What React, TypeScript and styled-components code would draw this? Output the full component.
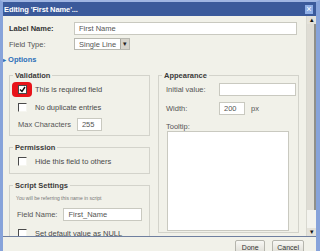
import styled, { createGlobalStyle } from "styled-components";

const GlobalStyle = createGlobalStyle`
  html, body {
    margin: 0;
    padding: 0;
    background: #ffffff;
  }
  body {
    font-family: Tahoma, "Liberation Sans", Arial, sans-serif;
  }
`;

export default function App() {
  return (
    <>
      <GlobalStyle />
      <Window>
        <TitleBar>
          <Title>Editing 'First Name'...</Title>
          <CloseButton>×</CloseButton>
        </TitleBar>
        <Body>
          <ScrollArea>
            <FormGrid>
              <Label $bold>Label Name:</Label>
              <TextInput $width="223px">First Name</TextInput>
              <Label>Field Type:</Label>
              <Select>
                <span>Single Line</span>
                <SelectArrow>▾</SelectArrow>
              </Select>
            </FormGrid>
            <Options>
              <span className="tri">▸</span> Options
            </Options>
            <Columns>
              <LeftColumn>
                <Fieldset $height="65px" $pad="2px">
                  <Legend>Validation</Legend>
                  <CheckRow>
                    <Highlight>
                      <CheckBox $checked>
                        <svg width="7" height="7" viewBox="0 0 7 7">
                          <path d="M1 3.5 L3 5.5 L6 1" stroke="#111" strokeWidth="1.4" fill="none" />
                        </svg>
                      </CheckBox>
                    </Highlight>
                    <CheckText>This is required field</CheckText>
                  </CheckRow>
                  <CheckRow>
                    <BoxSlot>
                      <CheckBox />
                    </BoxSlot>
                    <CheckText>No duplicate entries</CheckText>
                  </CheckRow>
                  <InlineRow $indent="8px">
                    <Label>Max Characters</Label>
                    <TextInput $width="25px">255</TextInput>
                  </InlineRow>
                </Fieldset>
                <Fieldset $height="31px" $pad="2px">
                  <Legend>Permission</Legend>
                  <CheckRow>
                    <BoxSlot>
                      <CheckBox />
                    </BoxSlot>
                    <CheckText>Hide this field to others</CheckText>
                  </CheckRow>
                </Fieldset>
                <Fieldset $height="72px" $pad="4px" $gap="5px">
                  <Legend>Script Settings</Legend>
                  <Hint>You will be referring this name in script</Hint>
                  <InlineRow $indent="7px">
                    <Label>Field Name:</Label>
                    <TextInput $width="79px">First_Name</TextInput>
                  </InlineRow>
                  <CheckRow>
                    <BoxSlot>
                      <CheckBox />
                    </BoxSlot>
                    <CheckText>Set default value as NULL</CheckText>
                  </CheckRow>
                </Fieldset>
              </LeftColumn>
              <Fieldset $height="162px" $pad="3px" $gap="6px">
                <Legend>Appearance</Legend>
                <InlineRow $indent="7px">
                  <Label $width="47px">Initial value:</Label>
                  <TextInput $width="77px" />
                </InlineRow>
                <InlineRow $indent="7px">
                  <Label $width="47px">Width:</Label>
                  <TextInput $width="26px">200</TextInput>
                  <Label>px</Label>
                </InlineRow>
                <TooltipBlock>
                  <Label $indent="7px">Tooltip:</Label>
                  <TextArea />
                </TooltipBlock>
              </Fieldset>
            </Columns>
          </ScrollArea>
          <Scrollbar>
            <ScrollButton>▴</ScrollButton>
            <Thumb />
            <Track />
            <ScrollButton>▾</ScrollButton>
          </Scrollbar>
        </Body>
        <Footer>
          <Button>Done</Button>
          <Button>Cancel</Button>
        </Footer>
      </Window>
    </>
  );
}

const Window = styled.div`
  width: 320px;
  height: 251px;
  box-sizing: border-box;
  overflow: hidden;
  display: flex;
  flex-direction: column;
  background: #f1f1e9;
  border-left: 3px solid #87a3da;
  border-right: 4px solid #87a3da;
  border-top: 2px solid #9fb5e2;
`;

const TitleBar = styled.div`
  height: 14px;
  flex: none;
  display: flex;
  align-items: center;
  justify-content: space-between;
  background: #3b5a9b;
  padding: 0 3px 0 1px;
`;

const Title = styled.span`
  color: #ffffff;
  font-weight: bold;
  font-size: 7.5px;
  letter-spacing: -0.1px;
`;

const CloseButton = styled.span`
  width: 8px;
  height: 9px;
  background: #8eaee6;
  color: #ffffff;
  font-size: 9px;
  line-height: 8px;
  text-align: center;
`;

const Body = styled.div`
  flex: none;
  height: 220px;
  display: flex;
  border-bottom: 1px solid #6f7f9f;
`;

const ScrollArea = styled.div`
  flex: 1;
  overflow: hidden;
  padding: 6px 8px 0 6px;
  font-size: 7.5px;
  color: #4a4a4a;
`;

const FormGrid = styled.div`
  display: grid;
  grid-template-columns: 65px 1fr;
  row-gap: 3px;
  align-items: center;
`;

const Label = styled.span<{ $bold?: boolean; $width?: string; $indent?: string }>`
  display: inline-block;
  font-size: 7.5px;
  line-height: 9px;
  color: ${({ $bold }) => ($bold ? "#333" : "#555")};
  font-weight: ${({ $bold }) => ($bold ? "bold" : "normal")};
  ${({ $width }) => $width && `width: ${$width};`}
  ${({ $indent }) => $indent && `padding-left: ${$indent};`}
`;

const TextInput = styled.div<{ $width: string }>`
  width: ${({ $width }) => $width};
  height: 13px;
  box-sizing: border-box;
  background: #ffffff;
  border: 1px solid #c9c9c0;
  padding: 0 4px;
  font-size: 7.5px;
  line-height: 11px;
  color: #555;
`;

const Select = styled.div`
  width: 56px;
  height: 12px;
  box-sizing: border-box;
  display: flex;
  align-items: center;
  justify-content: space-between;
  background: #ffffff;
  border: 1px solid #b8b8b0;
  padding-left: 4px;
  font-size: 7.5px;
  color: #555;
`;

const SelectArrow = styled.span`
  width: 8px;
  height: 10px;
  background: #d6d3ca;
  border-left: 1px solid #a8a8a0;
  font-size: 7px;
  line-height: 10px;
  text-align: center;
  color: #222;
`;

const Options = styled.div`
  margin: 5px 0 0 -6px;
  color: #2c6fb8;
  font-weight: bold;
  font-size: 7.5px;
  .tri {
    font-size: 6px;
  }
`;

const Columns = styled.div`
  display: grid;
  grid-template-columns: 141px 141px;
  column-gap: 8px;
  align-items: start;
  margin-top: 7px;
`;

const LeftColumn = styled.div`
  display: flex;
  flex-direction: column;
  gap: 7px;
`;

const Fieldset = styled.fieldset<{ $height: string; $pad?: string; $gap?: string }>`
  margin: 0;
  min-width: 0;
  height: ${({ $height }) => $height};
  box-sizing: border-box;
  border: 1px solid #d3d3cb;
  padding: ${({ $pad }) => $pad || "0"} 0 0 0;
  display: flex;
  flex-direction: column;
  gap: ${({ $gap }) => $gap || "3px"};
`;

const Legend = styled.legend`
  margin-left: 3px;
  padding: 0 2px;
  font-weight: bold;
  font-size: 7.5px;
  color: #3a3a3a;
`;

const CheckRow = styled.div`
  display: flex;
  align-items: center;
  height: 15px;
  padding-left: 2px;
  gap: 3px;
`;

const BoxSlot = styled.div`
  width: 20px;
  display: flex;
  justify-content: center;
`;

const Highlight = styled.div`
  width: 20px;
  height: 15px;
  border-radius: 4px;
  background: #e8141a;
  display: flex;
  align-items: center;
  justify-content: center;
`;

const CheckBox = styled.div<{ $checked?: boolean }>`
  width: 7px;
  height: 7px;
  background: #ffffff;
  border-top: 1px solid #4a4a4a;
  border-left: 1px solid #4a4a4a;
  border-right: 1px solid ${({ $checked }) => ($checked ? "#4a4a4a" : "#f6f6f0")};
  border-bottom: 1px solid ${({ $checked }) => ($checked ? "#4a4a4a" : "#f6f6f0")};
  display: flex;
  svg {
    display: block;
  }
`;

const CheckText = styled.span`
  font-size: 7.5px;
  color: #4a4a4a;
`;

const InlineRow = styled.div<{ $indent: string }>`
  display: flex;
  align-items: center;
  gap: 6px;
  padding-left: ${({ $indent }) => $indent};
`;

const Hint = styled.div`
  font-size: 5px;
  color: #777;
  padding-left: 6px;
  margin: 1px 0 2px;
`;

const TooltipBlock = styled.div`
  display: flex;
  flex-direction: column;
  margin-top: 2px;
  ${Label} {
    line-height: 8px;
  }
`;

const TextArea = styled.div`
  margin: 0 0 0 8px;
  width: 122px;
  height: 100px;
  box-sizing: border-box;
  background: #ffffff;
  border: 1px solid #c9c9c0;
`;

const Scrollbar = styled.div`
  width: 9px;
  flex: none;
  display: flex;
  flex-direction: column;
  background: #ebeae2;
  border-left: 1px solid #d8d8d0;
`;

const ScrollButton = styled.div`
  height: 8px;
  flex: none;
  font-size: 7px;
  line-height: 8px;
  text-align: center;
  color: #111;
  background: #e4e2da;
`;

const Thumb = styled.div`
  height: 186px;
  flex: none;
  background: #dedcd4;
  border-right: 2px solid #8f8f8a;
`;

const Track = styled.div`
  flex: 1;
  background: #f3f3ee;
`;

const Footer = styled.div`
  flex: 1;
  display: flex;
  justify-content: flex-end;
  align-items: flex-start;
  gap: 7px;
  padding: 3px 12px 0 0;
`;

const Button = styled.div`
  min-width: 30px;
  height: 15px;
  box-sizing: border-box;
  padding: 0 4px;
  border: 1px solid #b5b5ad;
  border-radius: 2px;
  background: linear-gradient(#f8f8f4, #dcdbd3);
  font-size: 7px;
  line-height: 13px;
  text-align: center;
  color: #333;
`;
